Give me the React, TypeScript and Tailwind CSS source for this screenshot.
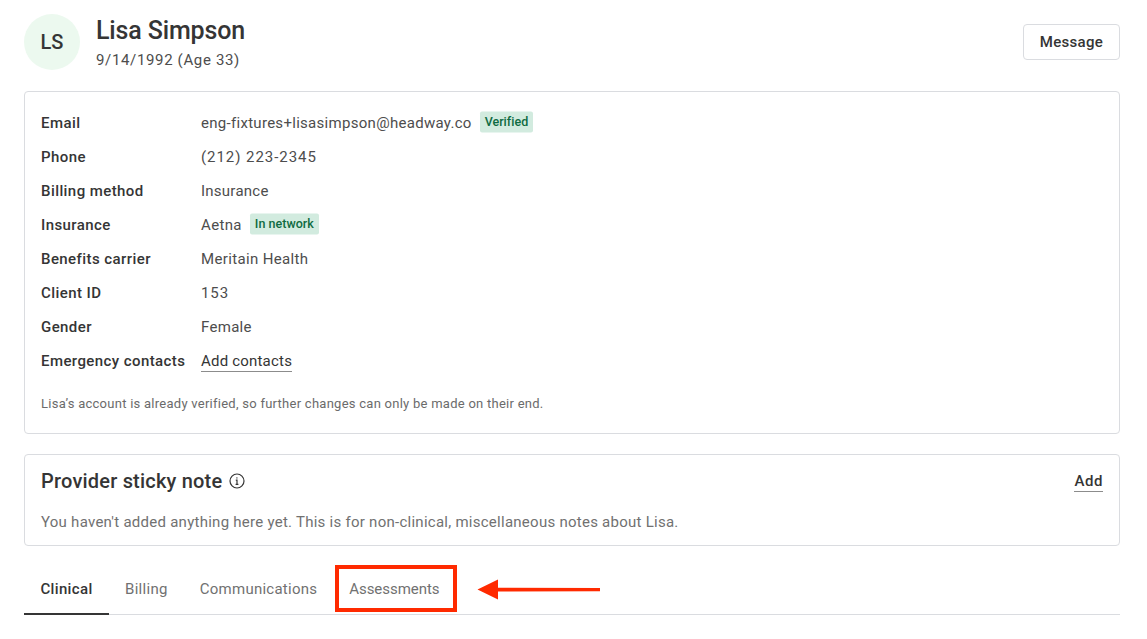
const rows: { label: string; value: string; badge?: string; link?: boolean; spacing: string }[] = [
	{ label: "Email", value: "eng-fixtures+lisasimpson@headway.co", badge: "Verified", spacing: "tracking-[0.29px]" },
	{ label: "Phone", value: "(212) 223-2345", spacing: "tracking-[0.95px]" },
	{ label: "Billing method", value: "Insurance", spacing: "tracking-[0.25px]" },
	{ label: "Insurance", value: "Aetna", badge: "In network", spacing: "tracking-[0.35px]" },
	{ label: "Benefits carrier", value: "Meritain Health", spacing: "tracking-[0.35px]" },
	{ label: "Client ID", value: "153", spacing: "tracking-[0.9px]" },
	{ label: "Gender", value: "Female", spacing: "tracking-[0.3px]" },
	{ label: "Emergency contacts", value: "Add contacts", link: true, spacing: "tracking-[0.2px]" },
];

export default function App() {
	return (
		<div className="relative w-[1147px] h-[639px] overflow-hidden bg-white pl-6 pr-[27px] pt-[14px] font-['Roboto',sans-serif] text-[#353535]">
			<div className="flex justify-between h-[56px]">
				<div className="flex gap-4">
					<div className="w-14 h-14 rounded-full bg-[#ecf9ef] flex items-center justify-center text-[20px] font-medium">LS</div>
					<div>
						<div className="text-[25px] leading-[34px] font-medium tracking-[-0.15px]">Lisa Simpson</div>
						<div className="mt-[2px] text-[15px] leading-[20px] tracking-[0.65px] text-[#4d4d4d]">9/14/1992 (Age 33)</div>
					</div>
				</div>
				<button type="button" className="mt-[10px] h-[36px] w-[97px] border border-[#dadce0] rounded text-[15px] font-medium tracking-[0.3px]">
					Message
				</button>
			</div>

			<div className="mt-[21px] h-[343px] border border-[#dadce0] rounded pl-4 pt-[14px]">
				{rows.map((r) => (
					<div key={r.label} className="flex items-center h-[34px] text-[15px]">
						<div className="w-[160px] font-medium whitespace-nowrap tracking-[0.42px]">{r.label}</div>
						{r.link ? (
							<span className={`${r.spacing} text-[#353535] leading-[20px] border-b border-[#8c8c8c]`}>{r.value}</span>
						) : (
							<span className={`${r.spacing} text-[#4d4d4d]`}>{r.value}</span>
						)}
						{r.badge && (
							<span className="ml-2 px-[5px] h-[21px] leading-[20px] rounded-[2px] bg-[#d2ebdf] text-[#0f6b42] text-[12.5px] font-medium tracking-[0.02px] -translate-y-[1.5px]">
								{r.badge}
							</span>
						)}
					</div>
				))}
				<div className="mt-[17px] text-[13px] leading-[18px] tracking-[0.26px] text-[#6b6b6b]">
					Lisa’s account is already verified, so further changes can only be made on their end.
				</div>
			</div>

			<div className="mt-5 h-[92px] border border-[#dadce0] rounded px-4 pt-[11px]">
				<div className="flex justify-between items-center h-[30px]">
					<div className="flex items-center gap-[7px]">
						<span className="text-[20px] font-medium tracking-[0.2px]">Provider sticky note</span>
						<svg width="16" height="16" viewBox="0 0 16 16" fill="none" stroke="#353535" strokeWidth="1.2">
							<circle cx="8" cy="8" r="7" />
							<path d="M6.8 7.2H8V11.4M6.6 11.4H9.4" />
							<circle cx="7.9" cy="4.9" r="0.7" fill="#353535" stroke="none" />
						</svg>
					</div>
					<span className="text-[15px] font-medium tracking-[0.55px] leading-[20px] border-b border-[#8c8c8c]">Add</span>
				</div>
				<div className="mt-[16px] text-[15px] leading-[20px] tracking-[0.26px] text-[#717171]">
					You haven't added anything here yet. This is for non-clinical, miscellaneous notes about Lisa.
				</div>
			</div>

			<div className="mt-[22px] h-[47px] border-b border-[#dadce0] flex text-[15px]">
				<div className="w-[85px] h-[47px] border-b-2 border-[#353535] flex items-center justify-center pb-[3px] font-medium tracking-[0.35px]">Clinical</div>
				<div className="ml-[16px] h-[46px] flex items-center pb-[3px] text-[#717171] tracking-[0.3px]">Billing</div>
				<div className="ml-[32px] h-[46px] flex items-center pb-[3px] text-[#717171] tracking-[0.25px]">Communications</div>
				<div className="ml-[32px] h-[46px] flex items-center pb-[3px] text-[#717171] tracking-[-0.05px]">Assessments</div>
			</div>

			<div className="absolute left-[335px] top-[565px] w-[122px] h-[47px] border-[4px] border-[#ff2a00]" />
			<svg className="absolute left-[476px] top-[578px]" width="126" height="24" viewBox="0 0 126 24">
				<path d="M1.5 11.5L22 1.5V9.8L124 10V13.2L22 13.4V21.5Z" fill="#ff2a00" />
			</svg>
		</div>
	);
}
